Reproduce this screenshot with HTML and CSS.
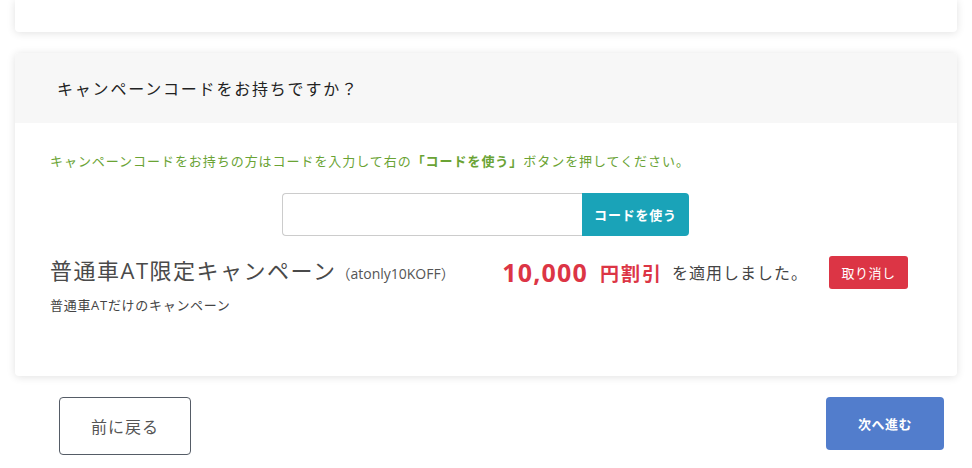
FILE: index.html
```html
<!DOCTYPE html>
<html lang="ja">
<head>
<meta charset="utf-8">
<link rel="stylesheet" href="styles.css">
</head>
<body>
<div class="page">
  <div class="card card-top"></div>
  <div class="card campaign">
    <div class="card-header">キャンペーンコードをお持ちですか？</div>
    <div class="card-body">
      <p class="hint">キャンペーンコードをお持ちの方はコードを入力して右の<strong>「コードを使う」</strong>ボタンを押してください。</p>
      <div class="code-group">
        <input class="code-input" type="text">
        <button class="code-btn">コードを使う</button>
      </div>
      <div class="applied">
        <div class="applied-info">
          <div class="applied-title">普通車AT限定キャンペーン<span class="code">（atonly10KOFF）</span></div>
          <div class="applied-desc">普通車ATだけのキャンペーン</div>
        </div>
        <div class="applied-result">
          <span class="amount">10,000</span><span class="unit">円割引</span><span class="msg">を適用しました。</span>
          <button class="cancel-btn">取り消し</button>
        </div>
      </div>
    </div>
  </div>
  <div class="actions">
    <button class="back-btn">前に戻る</button>
    <button class="next-btn">次へ進む</button>
  </div>
</div>
</body>
</html>
```
FILE: styles.css
```css
* { box-sizing: border-box; }
html, body { margin: 0; background: #fff; }
body {
  font-family: "Open Sans", "Noto Sans CJK JP", sans-serif;
  color: #333;
}
.page {
  padding: 0 15px;
}
.card {
  background: #fff;
  border-radius: 4px;
  box-shadow: 0 1px 8px rgba(0,0,0,0.12);
}
.card-top {
  height: 32px;
  border-radius: 0 0 4px 4px;
}
.campaign {
  margin-top: 21px;
  height: 323px;
  overflow: hidden;
}
.card-header {
  background: #f7f7f7;
  height: 70px;
  padding-left: 42px;
  display: flex;
  align-items: center;
  font-family: "Noto Sans CJK JP", sans-serif;
  font-size: 16px;
  letter-spacing: 1.8px;
  color: #222;
}
.card-body {
  padding: 29px 35px 0;
}
.hint {
  margin: 0;
  font-family: "Noto Sans CJK JP", sans-serif;
  font-size: 13px;
  letter-spacing: 0.95px;
  line-height: 18px;
  color: #6aa334;
}
.hint strong { font-weight: 700; }
.code-group {
  display: flex;
  justify-content: center;
  margin-top: 23px;
  padding-right: 1px;
}
.code-input {
  width: 300px;
  height: 43px;
  border: 1px solid #ccc;
  border-right: none;
  border-radius: 4px 0 0 4px;
  margin: 0;
  padding: 0 10px;
  outline: none;
}
.code-btn {
  width: 107px;
  height: 43px;
  border: none;
  border-radius: 0 4px 4px 0;
  background: #1aa3b8;
  color: #fff;
  font-family: "Noto Sans CJK JP", sans-serif;
  font-size: 13px;
  letter-spacing: 0.8px;
  font-weight: 700;
  margin: 0;
  padding: 0;
}
.applied {
  display: flex;
  justify-content: space-between;
  margin-top: 18px;
}
.applied-info {
  display: flex;
  flex-direction: column;
}
.applied-title {
  font-size: 22px;
  letter-spacing: 1.5px;
  line-height: 32px;
  color: #4a4a4a;
  display: flex;
  align-items: baseline;
}
.code {
  font-size: 14px;
  letter-spacing: 0;
  color: #555;
  margin-left: 0;
}
.applied-desc {
  font-size: 13px;
  letter-spacing: 0.7px;
  line-height: 18px;
  margin-top: 6px;
  color: #444;
}
.applied-result {
  display: flex;
  align-items: center;
  height: 34px;
  margin-top: 1px;
  padding-right: 14px;
}
.amount {
  font-size: 25px;
  letter-spacing: 1.2px;
  font-weight: 700;
  color: #dc3545;
}
.unit {
  font-family: "Noto Sans CJK JP", sans-serif;
  font-size: 19px;
  letter-spacing: 2px;
  font-weight: 700;
  color: #dc3545;
  margin-left: 12px;
}
.msg {
  font-family: "Noto Sans CJK JP", sans-serif;
  font-size: 16px;
  letter-spacing: 1px;
  color: #444;
  margin-left: 9px;
}
.cancel-btn {
  margin-left: 21px;
  width: 79px;
  height: 33px;
  border: none;
  border-radius: 3px;
  background: #dc3545;
  color: #fff;
  font-family: "Noto Sans CJK JP", sans-serif;
  font-size: 13px;
  letter-spacing: 0.5px;
  padding: 0;
}
.actions {
  display: flex;
  justify-content: space-between;
  align-items: flex-start;
  margin-top: 21px;
  padding: 0 13px 0 44px;
}
.back-btn {
  width: 132px;
  height: 58px;
  border: 1px solid #555c66;
  border-radius: 4px;
  background: #fff;
  color: #555;
  font-family: "Noto Sans CJK JP", sans-serif;
  font-size: 16px;
  letter-spacing: 1px;
  padding: 0;
}
.next-btn {
  width: 118px;
  height: 53px;
  border: none;
  border-radius: 4px;
  background: #527dcc;
  color: #fff;
  font-family: "Noto Sans CJK JP", sans-serif;
  font-size: 13px;
  letter-spacing: 0.5px;
  font-weight: 700;
  padding: 0;
}
```
